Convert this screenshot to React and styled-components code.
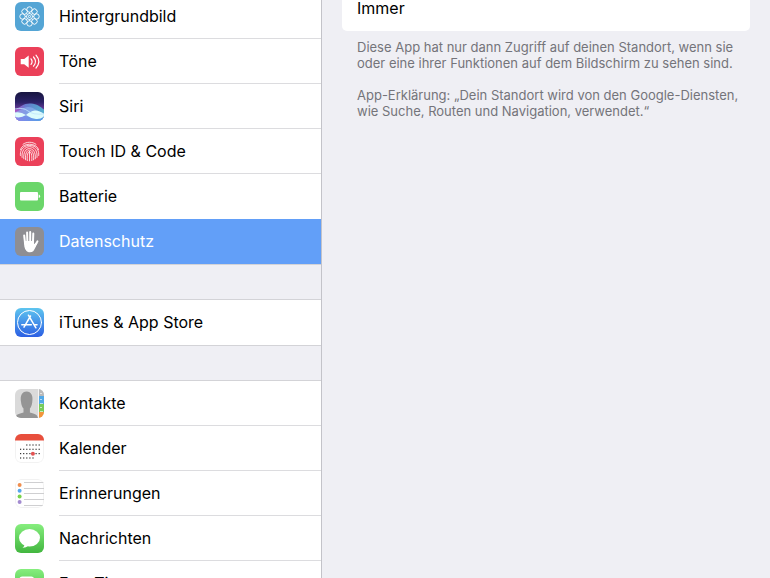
import React, { useState } from 'react';
import styled, { createGlobalStyle } from 'styled-components';

const GlobalStyle = createGlobalStyle`
  body {
    margin: 0;
    background: #efeff4;
    font-family: Inter, 'Liberation Sans', sans-serif;
  }
`;

const Screen = styled.div`
  display: flex;
  height: 100vh;
  overflow: hidden;
`;

const Sidebar = styled.nav`
  flex: 0 0 321px;
  overflow: hidden;
  background: #efeff4;
  border-right: 1px solid #c3c3c9;
`;

// The lists are scrolled a little, so the first row starts above the screen
const Groups = styled.div`
  display: flex;
  flex-direction: column;
  gap: 34px;
  margin-top: -7px;
`;

const Group = styled.ul`
  margin: 0;
  padding: 0;
  list-style: none;
  background: #fff;
  border-top: 1px solid #d3d3d7;
  border-bottom: 1px solid #d3d3d7;
`;

const Row = styled.a`
  display: flex;
  gap: 15px;
  height: 45px;
  padding-left: 15px;
  color: ${(props) => (props.$active ? '#fff' : '#000')};
  background: ${(props) => (props.$active ? '#629ff8' : '#fff')};
  text-decoration: none;
`;

const Icon = styled.svg`
  flex: none;
  align-self: center;
  width: 29px;
  height: 29px;
  border-radius: 6px;
`;

const Label = styled.span`
  flex: 1;
  box-sizing: border-box;
  height: 45px;
  font-size: 16px;
  line-height: 45px;
  white-space: nowrap;
  border-bottom: 1px solid ${(props) => (props.$line ? '#dcdcdf' : 'transparent')};
`;

const Detail = styled.main`
  flex: 1;
  min-width: 0;
  padding: 0 20px;
`;

const Card = styled.section`
  margin-top: -14px;
  overflow: hidden;
  border-radius: 5px;
  background: #fff;
`;

const Option = styled.button`
  display: block;
  width: 100%;
  height: 45px;
  padding: 0 15px 2px;
  border: 0;
  background: #fff;
  color: #000;
  font-family: inherit;
  font-size: 16px;
  text-align: left;
`;

const Note = styled.p`
  margin: 0;
  padding: 8px 6px 8px 15px;
  color: #74747a;
  font-size: 13px;
  line-height: 16px;
`;

const petals = [0, 45, 90, 135, 180, 225, 270, 315];

const WallpaperIcon = () => (
  <Icon viewBox="0 0 29 29" aria-hidden="true">
    <rect width="29" height="29" fill="#54a5d5" />
    <g fill="none" stroke="#fff" strokeWidth="0.9">
      {petals.map((angle) => (
        <g key={angle} transform={`rotate(${angle} 14.5 14.5)`}>
          <circle cx="14.5" cy="7.5" r="2.7" />
          <path d="M14.5 10.2v1.300" />
        </g>
      ))}
      <circle cx="14.5" cy="14.5" r="3" />
      <circle cx="14.5" cy="14.5" r="1.1" />
    </g>
  </Icon>
);

const SoundIcon = () => (
  <Icon viewBox="0 0 29 29" aria-hidden="true">
    <rect width="29" height="29" fill="#eb4059" />
    <path d="M5.7 12h3.500l4.500-3.500v12.200L9.200 17.300H5.700z" fill="#fff" />
    <g fill="none" stroke="#fff" strokeWidth="1.2" strokeLinecap="round">
      <path d="M16 11.800q2.200 2.800 0 5.600" />
      <path d="M18.500 10q4 4.600 0 9.200" />
      <path d="M21 8.200q5.600 6.400 0 12.800" />
    </g>
  </Icon>
);

const SiriIcon = () => (
  <Icon viewBox="0 0 29 29" aria-hidden="true">
    <defs>
      <linearGradient id="siriSky" x1="0" y1="0" x2="0" y2="1">
        <stop offset="0" stopColor="#17153f" />
        <stop offset="0.35" stopColor="#2a2166" />
        <stop offset="0.6" stopColor="#6a3d9c" />
      </linearGradient>
      <linearGradient id="siriWave" x1="0" y1="0" x2="1" y2="0">
        <stop offset="0" stopColor="#b654c8" />
        <stop offset="0.35" stopColor="#6e86dd" />
        <stop offset="1" stopColor="#4cc3d8" />
      </linearGradient>
      <linearGradient id="siriFloor" x1="0" y1="0" x2="1" y2="0">
        <stop offset="0" stopColor="#8a86ea" />
        <stop offset="1" stopColor="#4f9fe6" />
      </linearGradient>
    </defs>
    <rect width="29" height="29" fill="url(#siriSky)" />
    <path d="M0 18C5 15 9 11 16 11.500c6 .5 9 3 13 6V29H0z" fill="url(#siriWave)" opacity="0.85" />
    <path d="M0 20c5-1 8-5 13-5 6 0 10 5 16 6v8H0z" fill="#8fb4f1" opacity="0.6" />
    <path d="M0 25q7-3 14 0t15 0v4H0z" fill="url(#siriFloor)" />
    <path d="M0 20.500q6-1 11 2.500 4-4 9-4.500 5 0 9 3.500v2.500q-4 3-8 2.500-5-.5-10-4-5 3.500-11 2z" fill="#dcfbfc" />
    <path d="M0 17q8-2 13 2t16 3" fill="none" stroke="#bfe3fb" strokeWidth="0.8" />
  </Icon>
);

const TouchIcon = () => (
  <Icon viewBox="0 0 29 29" aria-hidden="true">
    <rect width="29" height="29" fill="#eb4059" />
    <g fill="none" stroke="#fff" strokeWidth="0.8" strokeLinecap="round">
      <path d="M8 7.3C11.5 4.5 17.5 4.5 21 7.3" />
      <path d="M5.4 12.5C7.4 5.3 21.6 5.3 23.6 12.5" />
      <path d="M5.4 18.5C3.8 5 25.2 4.5 23.7 18.5" />
      <path d="M7.1 20.4C5.2 6 23.9 6 22 20.4" />
      <path d="M8.8 21.8C7.1 8 21.8 8 20.3 21.8" />
      <path d="M10.6 22.8C8.9 9.8 20.1 9.8 18.6 22.8" />
      <path d="M12.3 23.6C11.2 11.4 17.8 11.4 16.8 23.6" />
      <path d="M14.5 14.5v9.4" />
    </g>
  </Icon>
);

const BatteryIcon = () => (
  <Icon viewBox="0 0 29 29" aria-hidden="true">
    <rect width="29" height="29" fill="#6bd66a" />
    <rect x="5" y="10" width="18" height="8.6" rx="1" fill="#fff" />
    <path d="M23.7 12.6q1.4.2 1.4 1.7t-1.4 1.7z" fill="#fff" />
  </Icon>
);

const PrivacyIcon = () => (
  <Icon viewBox="0 0 29 29" aria-hidden="true">
    <rect width="29" height="29" fill="#8e8e93" />
    <g stroke="#fff" strokeWidth="2" strokeLinecap="round" fill="none">
      <path d="M9.2 8.6l.9 8" />
      <path d="M12.1 5.6l.3 10" />
      <path d="M15.2 4.9v10" />
      <path d="M18.3 6.6l-.4 10" />
      <path d="M22.4 14.4l-3.2 5.4" />
    </g>
    <path d="M9.1 14h9.8v3.2l2.6-1.8 1 .6c-1.6 3-2.6 6.2-4.3 8.3-1.7 1.4-5.2 1.4-6.7-.3C9.1 21.4 9 18 9.1 14z" fill="#fff" />
  </Icon>
);

const StoreIcon = () => (
  <Icon viewBox="0 0 29 29" aria-hidden="true">
    <defs>
      <linearGradient id="store" x1="0" y1="0" x2="0" y2="1">
        <stop offset="0" stopColor="#5ec5ef" />
        <stop offset="1" stopColor="#2c5fe3" />
      </linearGradient>
    </defs>
    <rect width="29" height="29" fill="url(#store)" />
    <g fill="none" stroke="#fff" strokeLinecap="round">
      <circle cx="14.5" cy="14.5" r="12" strokeWidth="1" />
      <path d="M13.4 7.2l7.5 12.6M15.5 8L9 19.2" strokeWidth="1.5" />
      <path d="M6.8 16.7h9.5M19.5 16.7h2.5" strokeWidth="1.5" />
    </g>
  </Icon>
);

const ContactsIcon = () => (
  <Icon viewBox="0 0 29 29" aria-hidden="true">
    <rect width="29" height="29" fill="#dadada" />
    <path d="M0 29c.6-3.6 3.500-4.300 8.500-5.600v-4c-1.600-1.700-2.200-4-2.400-6C4.800 6.500 7 2.400 11.600 2.400S18.400 6.500 17.200 13.400c-.2 2-.8 4.300-2.300 6v4C20 24.700 22.400 25.400 23 29z" fill="#959595" />
    <rect x="23" width="1" height="29" fill="#f4f4f4" />
    <rect x="24" width="5" height="7" fill="#b9b9b9" />
    <rect x="24" y="7" width="5" height="8" fill="#53a9e7" />
    <rect x="24" y="15" width="5" height="8" fill="#77cb5c" />
    <rect x="24" y="23" width="5" height="6" fill="#f3953a" />
    <g fill="#fff" opacity="0.6">
      <rect x="25" y="4" width="2" height="1" />
      <rect x="25" y="10" width="2" height="1" />
      <rect x="25" y="14" width="3" height="1" />
      <rect x="25" y="18" width="2" height="1" />
      <rect x="25" y="22" width="3" height="1" />
    </g>
  </Icon>
);

const calendarRows = [
  { y: 11, from: 2, to: 6 },
  { y: 15.3, from: 0, to: 6 },
  { y: 19.6, from: 0, to: 6 },
  { y: 24, from: 0, to: 4 },
];

const CalendarIcon = () => (
  <Icon viewBox="0 0 29 29" aria-hidden="true">
    <rect x="0.5" y="0.5" width="28" height="28" rx="5.5" fill="#fff" stroke="#f2f2f2" />
    <path d="M0 0h29v6.5H0z" fill="#e84f3d" />
    {calendarRows.map((row) =>
      Array.from({ length: row.to - row.from + 1 }, (_, i) => (
        <rect key={`${row.y}-${i}`} x={5 + (row.from + i) * 3.1} y={row.y - 0.6} width="1.2" height="1.2" fill="#333" />
      ))
    )}
    <circle cx="17.9" cy="19.7" r="2" fill="#e25252" />
  </Icon>
);

const reminders = ['#f08e4e', '#56a6ee', '#79d34c', '#a38bd0'];

const RemindersIcon = () => (
  <Icon viewBox="0 0 29 29" aria-hidden="true">
    <rect x="0.5" y="0.5" width="28" height="28" rx="5.5" fill="#fff" stroke="#f2f2f2" />
    {reminders.map((color, i) => (
      <circle key={color} cx="4.6" cy={6 + i * 5.7} r="2" fill={color} />
    ))}
    {[3, 9, 14, 20, 26].map((y) => (
      <rect key={y} x="9" y={y} width="20" height="1" fill="#cfcfd1" />
    ))}
  </Icon>
);

const GreenDefs = ({ id }) => (
  <defs>
    <linearGradient id={id} x1="0" y1="0" x2="0" y2="1">
      <stop offset="0" stopColor="#86ee7e" />
      <stop offset="1" stopColor="#42b63f" />
    </linearGradient>
  </defs>
);

const MessagesIcon = () => (
  <Icon viewBox="0 0 29 29" aria-hidden="true">
    <GreenDefs id="messages" />
    <rect width="29" height="29" fill="url(#messages)" />
    <ellipse cx="14.5" cy="13.8" rx="10.5" ry="8.7" fill="#fff" />
    <path d="M9.5 20c.1 1.8-.6 2.9-2 3.8 2.3.1 4.3-.7 5.7-2z" fill="#fff" />
  </Icon>
);

const FaceTimeIcon = () => (
  <Icon viewBox="0 0 29 29" aria-hidden="true">
    <GreenDefs id="facetime" />
    <rect width="29" height="29" fill="url(#facetime)" />
    <rect x="4.5" y="7.5" width="14.5" height="13" rx="2.5" fill="#fff" />
    <path d="M20 13.2l4.5-3.7v10L20 15.8z" fill="#fff" />
  </Icon>
);

const groups = [
  [
    { name: 'Hintergrundbild', icon: WallpaperIcon },
    { name: 'Töne', icon: SoundIcon },
    { name: 'Siri', icon: SiriIcon },
    { name: 'Touch ID & Code', icon: TouchIcon },
    { name: 'Batterie', icon: BatteryIcon },
    { name: 'Datenschutz', icon: PrivacyIcon },
  ],
  [{ name: 'iTunes & App Store', icon: StoreIcon }],
  [
    { name: 'Kontakte', icon: ContactsIcon },
    { name: 'Kalender', icon: CalendarIcon },
    { name: 'Erinnerungen', icon: RemindersIcon },
    { name: 'Nachrichten', icon: MessagesIcon },
    { name: 'FaceTime', icon: FaceTimeIcon },
  ],
];

const App = () => {
  const [active, setActive] = useState('Datenschutz');

  const handleSelect = (e, name) => {
    e.preventDefault();
    setActive(name);
  };

  return (
    <Screen>
      <GlobalStyle />
      <Sidebar>
        <Groups>
          {groups.map((items) => (
            <Group key={items[0].name}>
              {items.map(({ name, icon: ItemIcon }, i) => (
                <li key={name}>
                  <Row href="#" $active={active === name} onClick={(e) => handleSelect(e, name)}>
                    <ItemIcon />
                    <Label $line={i < items.length - 1 && active !== name && active !== items[i + 1].name}>
                      {name}
                    </Label>
                  </Row>
                </li>
              ))}
            </Group>
          ))}
        </Groups>
      </Sidebar>
      <Detail>
        <Card>
          <Option type="button">Immer</Option>
        </Card>
        <Note>
          Diese App hat nur dann Zugriff auf deinen Standort, wenn sie oder eine ihrer Funktionen auf dem Bildschirm zu
          sehen sind.
        </Note>
        <Note>
          App-Erklärung: „Dein Standort wird von den Google-Diensten, wie Suche, Routen und Navigation, verwendet.“
        </Note>
      </Detail>
    </Screen>
  );
};

export default App;
